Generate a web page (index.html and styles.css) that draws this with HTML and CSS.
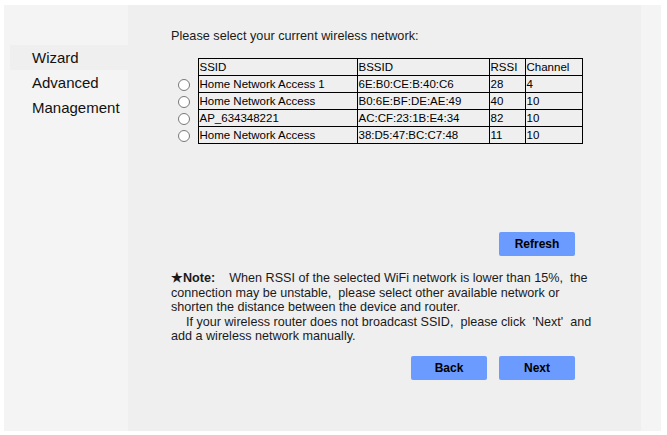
FILE: index.html
```html
<html>
<head>
    <meta charset="UTF-8">
    <meta name="viewport" content="width=device-width, initial-scale=1.0">
    <title>Wizard</title>
    <link rel="stylesheet" href="styles.css">
</head>

<body>
    <div class="frame">
        <div class="side">
            <div class="menu-item active">Wizard</div>
            <div class="menu-item">Advanced</div>
            <div class="menu-item">Management</div>
        </div>
        <div class="main">
            <div class="title">Please select your current wireless network:</div>
            <table class="scan">
                <colgroup>
                    <col class="c-radio"><col class="c-ssid"><col class="c-bssid"><col class="c-rssi"><col class="c-chan">
                </colgroup>
                <tr class="head">
                    <td class="pick"></td><td>SSID</td><td>BSSID</td><td>RSSI</td><td>Channel</td>
                </tr>
                <tr>
                    <td class="pick"><input type="radio" name="net"></td><td>Home Network Access 1</td><td>6E:B0:CE:B:40:C6</td><td>28</td><td>4</td>
                </tr>
                <tr>
                    <td class="pick"><input type="radio" name="net"></td><td>Home Network Access</td><td>B0:6E:BF:DE:AE:49</td><td>40</td><td>10</td>
                </tr>
                <tr>
                    <td class="pick"><input type="radio" name="net"></td><td>AP_634348221</td><td>AC:CF:23:1B:E4:34</td><td>82</td><td>10</td>
                </tr>
                <tr>
                    <td class="pick"><input type="radio" name="net"></td><td>Home Network Access</td><td>38:D5:47:BC:C7:48</td><td>11</td><td>10</td>
                </tr>
            </table>
            <div class="actions refresh-row">
                <button class="btn">Refresh</button>
            </div>
            <div class="note">
                <b>&#9733;Note:</b>&nbsp;&nbsp;&nbsp; When RSSI of the selected WiFi network is lower than 15%,&nbsp; the<br>
                connection may be unstable,&nbsp; please select other available network or<br>
                shorten the distance between the device and router.<br>
                <span class="indent">If your wireless router does not broadcast SSID,&nbsp; please click&nbsp; 'Next'&nbsp; and</span><br>
                add a wireless network manually.
            </div>
            <div class="actions nav-row">
                <button class="btn">Back</button>
                <button class="btn">Next</button>
            </div>
        </div>
    </div>
</body>
</html>
```

FILE: styles.css
```css
body {
    margin: 0;
    background: #ffffff;
    color: #1a1a1a;
    font-family: "Liberation Sans", Arial, sans-serif;
}
.frame {
    display: flex;
    margin: 5px 6px 0 4px;
    height: 426px;
    background: #f4f4f4;
}
.side {
    width: 124px;
    padding-top: 40px;
    box-sizing: border-box;
}
.menu-item {
    height: 25px;
    line-height: 25px;
    padding-left: 22px;
    margin-left: 6px;
    font-size: 15px;
    color: #111;
}
.menu-item.active {
    background: #efefef;
}
.main {
    width: 513px;
    background: #efefef;
    padding: 23px 0 0 43px;
    box-sizing: border-box;
}
.title {
    font-size: 12.7px;
    line-height: 16px;
    margin-bottom: 14px;
}
.scan {
    border-collapse: collapse;
    table-layout: fixed;
    width: 411px;
    font-size: 11.5px;
    color: #000;
}
.c-radio { width: 27px; }
.c-ssid { width: 159px; }
.c-bssid { width: 132px; }
.c-rssi { width: 36px; }
.c-chan { width: 57px; }
.scan tr {
    height: 17px;
}
.scan td {
    border: 1px solid #000;
    padding: 0 1px;
    white-space: nowrap;
    overflow: hidden;
}
.scan td.pick {
    border: none;
    padding: 0;
    text-align: center;
}
.scan input[type="radio"] {
    margin: 2px 0 0 0;
    width: 12px;
    height: 12px;
    vertical-align: top;
}
.actions {
    display: flex;
    justify-content: flex-end;
    gap: 12px;
    width: 404px;
}
.refresh-row {
    margin-top: 88px;
}
.nav-row {
    margin-top: 12px;
}
.btn {
    width: 76px;
    height: 24px;
    border: 0;
    border-radius: 2px;
    background: #6b9bff;
    color: #000;
    font-family: "Liberation Sans", Arial, sans-serif;
    font-size: 12px;
    font-weight: bold;
    cursor: pointer;
}
.note {
    margin-top: 15px;
    font-size: 12.6px;
    line-height: 14.5px;
    white-space: nowrap;
}
.indent {
    padding-left: 15px;
}
```
